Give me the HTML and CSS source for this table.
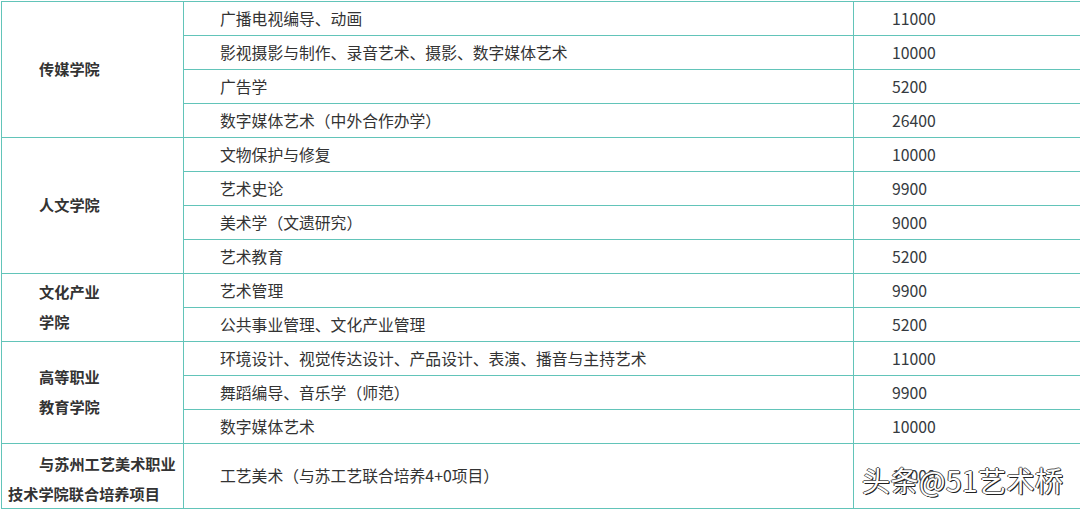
FILE: index.html
```html
<!DOCTYPE html>
<html lang="zh">
<head>
<meta charset="utf-8">
<link rel="stylesheet" href="styles.css">
</head>
<body>
<div class="wrap">
<table class="fees">
  <colgroup>
    <col class="c1"><col class="c2"><col class="c3">
  </colgroup>
  <tbody>
    <tr><td class="college" rowspan="4"><span class="ln">传媒学院</span></td><td class="major">广播电视编导、动画</td><td class="fee">11000</td></tr>
    <tr><td class="major">影视摄影与制作、录音艺术、摄影、数字媒体艺术</td><td class="fee">10000</td></tr>
    <tr><td class="major">广告学</td><td class="fee">5200</td></tr>
    <tr><td class="major">数字媒体艺术（中外合作办学）</td><td class="fee">26400</td></tr>
    <tr><td class="college" rowspan="4"><span class="ln">人文学院</span></td><td class="major">文物保护与修复</td><td class="fee">10000</td></tr>
    <tr><td class="major">艺术史论</td><td class="fee">9900</td></tr>
    <tr><td class="major">美术学（文遗研究）</td><td class="fee">9000</td></tr>
    <tr><td class="major">艺术教育</td><td class="fee">5200</td></tr>
    <tr><td class="college" rowspan="2"><span class="ln">文化产业</span><span class="ln">学院</span></td><td class="major">艺术管理</td><td class="fee">9900</td></tr>
    <tr><td class="major">公共事业管理、文化产业管理</td><td class="fee">5200</td></tr>
    <tr><td class="college" rowspan="3"><span class="ln">高等职业</span><span class="ln">教育学院</span></td><td class="major">环境设计、视觉传达设计、产品设计、表演、播音与主持艺术</td><td class="fee">11000</td></tr>
    <tr><td class="major">舞蹈编导、音乐学（师范）</td><td class="fee">9900</td></tr>
    <tr><td class="major">数字媒体艺术</td><td class="fee">10000</td></tr>
    <tr class="last"><td class="college joint"><span class="ln first">与苏州工艺美术职业</span><span class="ln">技术学院联合培养项目</span></td><td class="major">工艺美术（与苏工艺联合培养4+0项目）</td><td class="fee">10000</td></tr>
  </tbody>
</table>
<div class="watermark">头条@51艺术桥</div>
</div>
</body>
</html>
```

FILE: styles.css
```css
html, body {
  margin: 0;
  padding: 0;
  background: #ffffff;
}

.wrap {
  position: relative;
  width: 1080px;
  height: 511px;
  overflow: hidden;
}

.fees {
  margin: 1px 0 0 1px;
  width: 1079px;
  border-collapse: collapse;
  table-layout: fixed;
  font-family: "Noto Sans CJK SC", "Noto Sans", sans-serif;
  font-size: 15.8px;
  color: #333333;
}

.c1 { width: 182px; }
.c2 { width: 670px; }
.c3 { width: 227px; }

.fees td {
  border: 1px solid #62c4b9;
  height: 33px;
  padding: 0;
  line-height: 20px;
  vertical-align: middle;
  box-sizing: border-box;
}

.fees tr {
  height: 34px;
}

.fees tr.last {
  height: 65px;
}

.major {
  padding-left: 36px !important;
  white-space: nowrap;
}

.fee {
  padding-left: 38px !important;
  color: #353a40;
}

.college {
  font-weight: 700;
  font-size: 15.2px;
  padding-left: 37px !important;
  padding-bottom: 4px !important;
}

.college .ln {
  display: block;
  line-height: 30px;
}

.joint {
  padding-left: 6px !important;
  padding-top: 3px !important;
  padding-bottom: 0 !important;
}

.joint .first {
  padding-left: 31px;
}

.watermark {
  position: absolute;
  left: 862px;
  top: 461px;
  font-family: "Noto Sans CJK SC", "Noto Sans", sans-serif;
  font-size: 28px;
  line-height: 38px;
  letter-spacing: 0.5px;
  color: #ffffff;
  text-shadow: 1px 1px 0 #222, -1px 0 0 #444, 0 -1px 0 #666, 1px 0 0 #333;
  white-space: nowrap;
}
```
